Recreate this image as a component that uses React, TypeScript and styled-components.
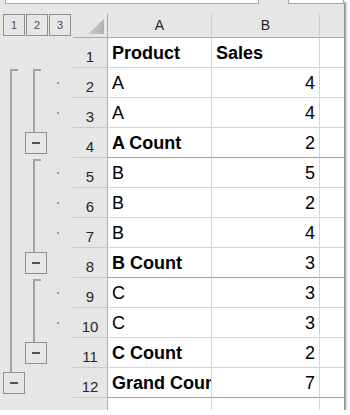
import styled, { createGlobalStyle } from "styled-components";

const GlobalStyle = createGlobalStyle`
  body {
    margin: 0;
    background: #ffffff;
    font-family: "Liberation Sans", Arial, sans-serif;
  }
`;

const Frame = styled.div`
  width: 344px;
  height: 410px;
  background: #e6e6e6;
  box-shadow: 2px 2px 2px rgba(0, 0, 0, 0.45);
  overflow: hidden;
`;

const FormulaStrip = styled.div`
  display: flex;
  gap: 29px;
  padding-left: 5px;
  height: 4px;
  margin-bottom: 10px;
`;

const FormulaField = styled.div<{ $width?: number }>`
  ${(p) => (p.$width ? `width: ${p.$width}px;` : "flex: 1;")}
  box-sizing: border-box;
  background: #ffffff;
  border: 1px solid #a8a8a8;
  border-top: none;
`;

const Sheet = styled.div`
  display: grid;
  grid-template-columns: 73px 35px 104px 108px 24px;
  grid-template-rows: 24px;
  grid-auto-rows: 30px;
  & > * {
    box-sizing: border-box;
  }
`;

const LevelBar = styled.div`
  display: flex;
  gap: 1px;
  padding-left: 3px;
  align-items: flex-start;
`;

const LevelButton = styled.div`
  width: 22px;
  height: 22px;
  box-sizing: border-box;
  border: 1px solid #8e8e8e;
  display: flex;
  align-items: center;
  justify-content: center;
  font-size: 11px;
  color: #505050;
`;

const Corner = styled.div`
  border-right: 1px solid #ababab;
  border-bottom: 1px solid #ababab;
  display: flex;
  justify-content: flex-end;
  align-items: flex-end;
  padding: 0 3px 3px 0;
`;

const CornerTriangle = styled.div`
  width: 16px;
  height: 15px;
  background: linear-gradient(to right, #cdcdcd, #b0b0b0);
  clip-path: polygon(100% 0, 100% 100%, 0 100%);
`;

const ColHeader = styled.div<{ $last?: boolean }>`
  border-right: ${(p) => (p.$last ? "none" : "1px solid #cfcfcf")};
  border-bottom: 1px solid #ababab;
  text-align: center;
  font-size: 14px;
  line-height: 23px;
  color: #262626;
`;

const Gutter = styled.div`
  display: grid;
  grid-template-columns: 24px 24px 25px;
`;

const Track = styled.div`
  display: flex;
  flex-direction: column;
`;

const Bracket = styled.div<{ $x: number }>`
  margin-top: 1px;
  margin-left: ${(p) => p.$x}px;
  width: 6px;
  flex: 1;
  border-left: 2px solid #a3a3a3;
  border-top: 2px solid #a3a3a3;
`;

const Stem = styled.div<{ $x: number; $h?: number }>`
  margin-left: ${(p) => p.$x}px;
  ${(p) => (p.$h ? `height: ${p.$h}px;` : "flex: 1;")}
  border-left: 2px solid #a3a3a3;
`;

const MinusBox = styled.div<{ $x: number }>`
  margin-left: ${(p) => p.$x}px;
  width: 22px;
  height: 22px;
  box-sizing: border-box;
  border: 1px solid #8e8e8e;
  display: flex;
  align-items: center;
  justify-content: center;
  &::before {
    content: "";
    width: 8px;
    height: 2px;
    background: #555555;
  }
`;

const DotCell = styled.div`
  display: flex;
  align-items: center;
  padding-left: 9px;
`;

const Dot = styled.div`
  width: 2px;
  height: 2px;
  background: #9a9a9a;
`;

const RowHeader = styled.div`
  border-right: 1px solid #ababab;
  border-bottom: 1px solid #cbcbcb;
  display: flex;
  justify-content: center;
  align-items: flex-end;
  padding-bottom: 2px;
  font-size: 15px;
  color: #262626;
`;

const Cell = styled.div<{ $bold?: boolean; $right?: boolean; $break?: boolean; $last?: boolean }>`
  background: #ffffff;
  border-right: ${(p) => (p.$last ? "none" : "1px solid #d4d4d4")};
  border-bottom: 1px solid ${(p) => (p.$break ? "#9e9e9e" : "#d4d4d4")};
  display: flex;
  align-items: flex-end;
  justify-content: ${(p) => (p.$right ? "flex-end" : "flex-start")};
  padding: 0 4px 3px 4px;
  font-size: 18px;
  font-weight: ${(p) => (p.$bold ? 700 : 400)};
  color: #000000;
  white-space: nowrap;
  overflow: hidden;
`;

type Kind = "none" | "start" | "line" | "button";

const L1 = { line: 10, box: 3 };
const L2 = { line: 9, box: 1 };

function OutlineTrack({ kind, pos }: { kind: Kind; pos: { line: number; box: number } }) {
  return (
    <Track>
      {kind === "start" && <Bracket $x={pos.line} />}
      {kind === "line" && <Stem $x={pos.line} />}
      {kind === "button" && (
        <>
          <Stem $x={pos.line} $h={4} />
          <MinusBox $x={pos.box} />
        </>
      )}
    </Track>
  );
}

type RowData = {
  a: string;
  b: string;
  bold?: boolean;
  header?: boolean;
  brk?: boolean;
  l1: Kind;
  l2: Kind;
  dot?: boolean;
};

const rows: RowData[] = [
  { a: "Product", b: "Sales", bold: true, header: true, l1: "none", l2: "none" },
  { a: "A", b: "4", l1: "start", l2: "start", dot: true },
  { a: "A", b: "4", l1: "line", l2: "line", dot: true },
  { a: "A Count", b: "2", bold: true, brk: true, l1: "line", l2: "button" },
  { a: "B", b: "5", l1: "line", l2: "start", dot: true },
  { a: "B", b: "2", l1: "line", l2: "line", dot: true },
  { a: "B", b: "4", l1: "line", l2: "line", dot: true },
  { a: "B Count", b: "3", bold: true, brk: true, l1: "line", l2: "button" },
  { a: "C", b: "3", l1: "line", l2: "start", dot: true },
  { a: "C", b: "3", l1: "line", l2: "line", dot: true },
  { a: "C Count", b: "2", bold: true, l1: "line", l2: "button" },
  { a: "Grand Count", b: "7", bold: true, brk: true, l1: "button", l2: "none" },
  { a: "", b: "", l1: "none", l2: "none" },
];

function Row({ row, index }: { row: RowData; index: number }) {
  return (
    <>
      <Gutter>
        <OutlineTrack kind={row.l1} pos={L1} />
        <OutlineTrack kind={row.l2} pos={L2} />
        <DotCell>{row.dot && <Dot />}</DotCell>
      </Gutter>
      <RowHeader>{index}</RowHeader>
      <Cell $bold={row.bold} $break={row.brk}>
        {row.a}
      </Cell>
      <Cell $bold={row.header} $right={!row.header} $break={row.brk}>
        {row.b}
      </Cell>
      <Cell $break={row.brk} $last />
    </>
  );
}

export default function App() {
  return (
    <>
      <GlobalStyle />
      <Frame>
        <FormulaStrip>
          <FormulaField $width={254} />
          <FormulaField />
        </FormulaStrip>
        <Sheet>
          <LevelBar>
            <LevelButton>1</LevelButton>
            <LevelButton>2</LevelButton>
            <LevelButton>3</LevelButton>
          </LevelBar>
          <Corner>
            <CornerTriangle />
          </Corner>
          <ColHeader>A</ColHeader>
          <ColHeader>B</ColHeader>
          <ColHeader $last />

          {rows.map((r, i) => (
            <Row key={i} row={r} index={i + 1} />
          ))}
        </Sheet>
      </Frame>
    </>
  );
}
